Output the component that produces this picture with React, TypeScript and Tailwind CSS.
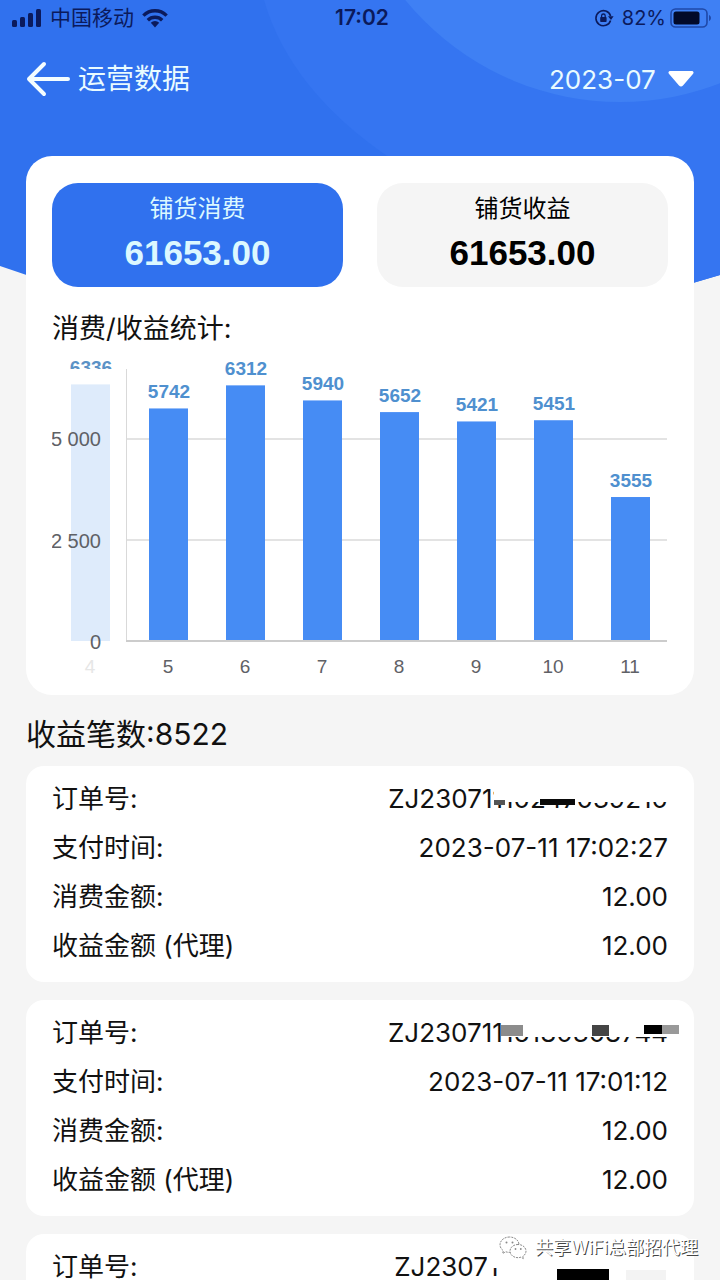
import React, { useState } from 'react'

type Mask = { x: number; y: number; w: number; h: number; fill: string }

type Order = {
  id: string
  paidAt: string
  spend: string
  income: string
  masks: Mask[]
}

const months = ['2023-07', '2023-06', '2023-05']

const tabs = [
  { id: 'spend', label: '铺货消费', value: '61653.00' },
  { id: 'income', label: '铺货收益', value: '61653.00' },
]

const stats = [
  { month: 5, value: 5742 },
  { month: 6, value: 6312 },
  { month: 7, value: 5940 },
  { month: 8, value: 5652 },
  { month: 9, value: 5421 },
  { month: 10, value: 5451 },
  { month: 11, value: 3555 },
]

// masks hide part of the order number, measured from the left of a 300x49 box
const orders: Order[] = [
  {
    id: 'ZJ23071110247039210',
    paidAt: '2023-07-11 17:02:27',
    spend: '12.00',
    income: '12.00',
    masks: [
      { x: 126, y: 8, w: 176, h: 20, fill: '#ffffff' },
      { x: 126, y: 26, w: 11, h: 5, fill: '#555555' },
      { x: 172, y: 25, w: 35, h: 6, fill: '#0a0a0a' },
    ],
  },
  {
    id: 'ZJ23071116180308744',
    paidAt: '2023-07-11 17:01:12',
    spend: '12.00',
    income: '12.00',
    masks: [
      { x: 137, y: 8, w: 165, h: 21, fill: '#ffffff' },
      { x: 133, y: 17, w: 22, h: 11, fill: '#8c8c8c' },
      { x: 224, y: 17, w: 17, h: 11, fill: '#444444' },
      { x: 276, y: 17, w: 18, h: 9, fill: '#000000' },
      { x: 294, y: 17, w: 17, h: 9, fill: '#999999' },
    ],
  },
  {
    id: 'ZJ23071116518204179',
    paidAt: '2023-07-11 17:00:46',
    spend: '12.00',
    income: '12.00',
    masks: [
      { x: 119, y: 8, w: 183, h: 18, fill: '#ffffff' },
      { x: 129, y: 8, w: 173, h: 34, fill: '#ffffff' },
      { x: 189, y: 27, w: 52, h: 14, fill: '#000000' },
      { x: 258, y: 28, w: 40, h: 13, fill: '#f3f3f3' },
    ],
  },
]

const StatusBar: React.FC = () => (
  <div className="grid h-9 shrink-0 grid-cols-3 items-center pl-3 pr-2 text-[20px] leading-6 text-[#0b1a5c]">
    <div className="flex items-center gap-2">
      <svg viewBox="0 0 30 20" className="h-5 w-[30px]" fill="currentColor" aria-hidden="true">
        <rect x="0" y="12" width="5" height="7" rx="1.5" />
        <rect x="8" y="9" width="5" height="10" rx="1.5" />
        <rect x="16" y="5" width="5" height="14" rx="1.5" />
        <rect x="24" y="1" width="5" height="18" rx="1.5" />
      </svg>
      <span className="text-[21px]">中国移动</span>
      <svg viewBox="0 0 26 20" className="h-5 w-[26px]" aria-hidden="true">
        <g fill="none" stroke="currentColor" strokeWidth="3.4">
          <path d="M1.4 7.6a16.4 16.4 0 0 1 23.2 0" />
          <path d="M5.8 12.2a10.2 10.2 0 0 1 14.4 0" />
        </g>
        <path d="M13 19.4l-4.2-4.6a6 6 0 0 1 8.4 0z" fill="currentColor" />
      </svg>
    </div>
    <div className="text-center text-[21px] font-semibold">17:02</div>
    <div className="flex items-center justify-end gap-2">
      <svg viewBox="0 0 20 20" className="h-5 w-5" fill="none" stroke="currentColor" aria-hidden="true">
        <path d="M16.6 8a7.5 7.5 0 1 0 0 4.4" strokeWidth="1.6" />
        <path d="M14 8.2h5.6L17 12z" fill="currentColor" stroke="none" />
        <rect x="6.2" y="9" width="6.4" height="5" rx="0.8" fill="currentColor" stroke="none" />
        <path d="M7.6 9.2V7.8a1.8 1.8 0 0 1 3.6 0v1.4" strokeWidth="1.3" />
      </svg>
      <span>82%</span>
      <svg viewBox="0 0 42 20" className="-ml-1 h-5 w-[42px]" aria-hidden="true">
        <rect x="1" y="1" width="36" height="18" rx="4.5" fill="none" stroke="#1f48a8" strokeWidth="1.6" />
        <rect x="3.5" y="3.5" width="26" height="13" rx="2.5" fill="#020a2a" />
        <path d="M39 7c2.6 1 2.6 5 0 6z" fill="#1f48a8" />
      </svg>
    </div>
  </div>
)

const BASE = 292
const UNIT = 0.0405

const StatsChart: React.FC = () => (
  <svg viewBox="0 0 616 334" className="block w-full" role="img" aria-label="消费/收益统计" fontFamily="Liberation Sans, Arial, sans-serif">
    <defs>
      <clipPath id="scrolled">
        <rect x="0" y="0" width="75" height="20" />
      </clipPath>
    </defs>

    {/* month that is scrolled behind the axis */}
    <rect x="19" y={BASE - 6336 * UNIT} width="39" height={6336 * UNIT} fill="#deebfb" />
    <text x="39" y="25" fontSize="19" fontWeight="700" textAnchor="middle" fill="#5b92c6" clipPath="url(#scrolled)">6336</text>
    <text x="38" y="324" fontSize="19" textAnchor="middle" fill="#e6e6e6">4</text>

    <g stroke="#e3e3e3" strokeWidth="2">
      <path d="M75 90H615" />
      <path d="M75 191H615" />
    </g>
    <path d="M74.500 20V292" stroke="#d9d9d9" strokeWidth="1" />
    <path d="M74 292H615" stroke="#cccccc" strokeWidth="2" />

    <g fontSize="20" fill="#5f6166" textAnchor="end">
      <text x="49" y="97">5 000</text>
      <text x="49" y="199">2 500</text>
      <text x="49" y="300">0</text>
    </g>

    {stats.map(({ month, value }, i) => {
      const cx = 117 + i * 77
      const top = BASE - value * UNIT
      return (
        <g key={month} textAnchor="middle">
          <rect x={cx - 20} y={top} width="39" height={BASE - top - 1} fill="#468cf4" />
          <text x={cx} y={top - 10} fontSize="19" fontWeight="700" fill="#4f90cf">{value}</text>
          <text x={cx - 1} y="324" fontSize="19" fill="#5f6166">{month}</text>
        </g>
      )
    })}
  </svg>
)

const Row: React.FC<{ label: string; children: React.ReactNode }> = ({ label, children }) => (
  <div className="relative flex h-[49px] items-center justify-between text-[26px]">
    <dt>{label}</dt>
    <dd>{children}</dd>
  </div>
)

const OrderCard: React.FC<{ order: Order }> = ({ order }) => (
  <dl className="rounded-[18px] bg-white px-[26px] pb-3 pt-2">
    <Row label="订单号:">
      {order.id}
      <svg viewBox="0 0 300 49" className="absolute right-0 top-0 h-[49px] w-[300px] overflow-visible" aria-hidden="true">
        {order.masks.map((m, i) => (
          <rect key={i} x={m.x} y={m.y} width={m.w} height={m.h} fill={m.fill} />
        ))}
      </svg>
    </Row>
    <Row label="支付时间:">{order.paidAt}</Row>
    <Row label="消费金额:">{order.spend}</Row>
    <Row label="收益金额 (代理)">{order.income}</Row>
  </dl>
)

export default function App() {
  const [month, setMonth] = useState(months[0])
  const [active, setActive] = useState('spend')

  return (
    <div className="relative h-screen overflow-hidden bg-[#f5f5f5] font-['Inter','Noto_Sans_CJK_SC',sans-serif] text-[#111111]">
      <svg viewBox="0 0 720 330" className="absolute inset-x-0 top-0 w-full" aria-hidden="true">
        <defs>
          <clipPath id="hero">
            <path d="M0 0H720V275Q540 330 360 330T0 266Z" />
          </clipPath>
        </defs>
        <g clipPath="url(#hero)">
          <rect width="720" height="330" fill="#3071ee" />
          <path d="M264 0Q290 90 390 158Q520 240 720 300V0Z" fill="#3575f1" />
          <circle cx="620" cy="-175" r="277" fill="#3f80f4" />
        </g>
      </svg>

      <div className="relative flex h-full flex-col">
        <StatusBar />

        <header className="flex h-[86px] shrink-0 items-center justify-between px-[26px] text-[#e9fbff]">
          <div className="flex items-center gap-2">
            <button type="button" aria-label="返回">
              <svg viewBox="0 0 44 36" className="block h-9 w-11" fill="none" stroke="#f4fdff" strokeWidth="4" strokeLinecap="round" strokeLinejoin="round">
                <path d="M42 18H3M18 3L3 18l15 15" />
              </svg>
            </button>
            <h1 className="text-[28px]">运营数据</h1>
          </div>
          <label className="flex items-center gap-2">
            <select
              aria-label="月份"
              value={month}
              onChange={(e) => setMonth(e.target.value)}
              className="w-[111px] appearance-none bg-transparent text-[26px] outline-none"
            >
              {months.map((m) => (
                <option key={m}>{m}</option>
              ))}
            </select>
            <svg viewBox="0 0 26 16" className="h-4 w-[26px]" fill="#ffffff" aria-hidden="true">
              <path d="M2.5 0h21c2 0 2.7 1.6 1.4 3L15 14.5c-1.2 1.3-2.8 1.3-4 0L1.1 3C-.2 1.6.5 0 2.5 0z" />
            </svg>
          </label>
        </header>

        <main className="mt-[34px] shrink-0 px-[26px]">
          <section className="rounded-[26px] bg-white px-[26px] pb-3 pt-[27px]">
            <div className="grid grid-cols-2 gap-[34px]">
              {tabs.map((tab) => (
                <button
                  key={tab.id}
                  type="button"
                  onClick={() => setActive(tab.id)}
                  className={`flex h-[104px] flex-col items-center justify-center rounded-[26px] pb-2 ${
                    active === tab.id ? 'bg-[#3071ee] text-[#dcf8ff]' : 'bg-[#f5f5f5] text-black'
                  }`}
                >
                  <span className="text-[24px] leading-[44px]">{tab.label}</span>
                  <span className="font-['Liberation_Sans',Arial,sans-serif] text-[35px] font-bold leading-[44px]">{tab.value}</span>
                </button>
              ))}
            </div>
            <h2 className="mt-[22px] text-[27px] leading-10">消费/收益统计:</h2>
            <StatsChart />
          </section>

          <h2 className="flex h-[71px] items-center pt-2 text-[30px]">收益笔数:8522</h2>

          <div className="flex flex-col gap-[18px]">
            {orders.map((order) => (
              <OrderCard key={order.id} order={order} />
            ))}
          </div>
        </main>
      </div>

      {/* account watermark */}
      <div className="absolute bottom-[18px] right-[22px] flex items-center gap-2">
        <svg viewBox="0 0 28 24" className="h-6 w-7" fill="#ffffff" stroke="#8a8a8a" strokeWidth="1" strokeDasharray="2 1" aria-hidden="true">
          <path d="M10.5 1C5.2 1 1 4.5 1 8.8c0 2.4 1.3 4.5 3.4 5.9L3.6 17.5l3.2-1.7c1.2.4 2.4.6 3.7.6 5.3 0 9.5-3.4 9.5-7.7S15.8 1 10.5 1z" />
          <path d="M19 8.5c-4.5 0-8 2.9-8 6.6s3.5 6.6 8 6.6c1 0 2-.2 2.9-.5l2.7 1.5-.7-2.4c1.9-1.2 3.1-3.1 3.1-5.2 0-3.7-3.5-6.6-8-6.6z" />
          <g fill="#8a8a8a" stroke="none">
            <circle cx="7.5" cy="6.5" r="1" />
            <circle cx="13.5" cy="6.5" r="1" />
            <circle cx="16.5" cy="13" r="0.9" />
            <circle cx="21.8" cy="13" r="0.9" />
          </g>
        </svg>
        <span className="text-[18px] leading-7 text-white [text-shadow:1px_1px_0_#444444]">共享WiFi总部招代理</span>
      </div>
    </div>
  )
}
